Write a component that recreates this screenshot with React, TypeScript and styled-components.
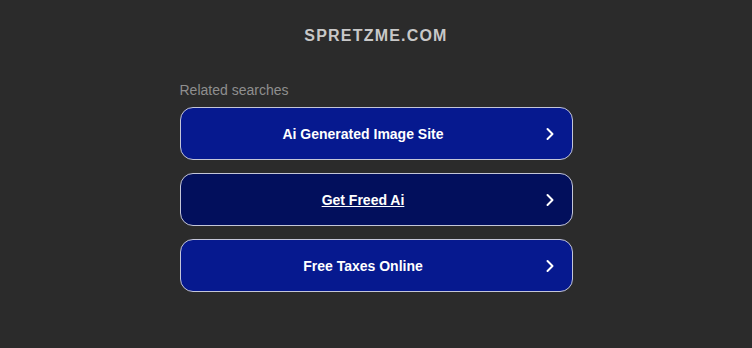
import React from "react";
import styled, { createGlobalStyle } from "styled-components";

const GlobalStyle = createGlobalStyle`
  html, body {
    margin: 0;
    padding: 0;
    background: #2b2b2b;
    font-family: "Liberation Sans", Arial, sans-serif;
  }
`;

const Page = styled.div`
  width: 752px;
  height: 348px;
  display: flex;
  flex-direction: column;
  align-items: center;
  padding-top: 27px;
  box-sizing: border-box;
`;

const Domain = styled.h1`
  margin: 0;
  font-size: 16px;
  font-weight: 700;
  letter-spacing: 1.2px;
  color: #c8c8c8;
  line-height: 18px;
`;

const Related = styled.section`
  width: 393px;
  margin-top: 37px;
  display: flex;
  flex-direction: column;
`;

const Caption = styled.div`
  font-size: 14px;
  color: #8f8f8f;
  line-height: 16px;
  margin-bottom: 9px;
`;

const LinkList = styled.div`
  display: flex;
  flex-direction: column;
  gap: 13px;
`;

const LinkButton = styled.a<{ $active?: boolean }>`
  height: 53px;
  box-sizing: border-box;
  display: flex;
  align-items: center;
  padding: 0 12px 0 6px;
  border: 1.5px solid #c4c6d8;
  border-radius: 13px;
  background: ${p => (p.$active ? "#020f5c" : "#06198f")};
  color: #ffffff;
  text-decoration: none;
  cursor: pointer;
`;

const Label = styled.span<{ $active?: boolean }>`
  flex: 1;
  text-align: center;
  font-size: 14px;
  font-weight: 700;
  text-decoration: ${p => (p.$active ? "underline" : "none")};
`;

const Arrow = styled.span`
  width: 20px;
  display: flex;
  justify-content: center;
`;

const Chevron = () => (
  <svg width="10" height="14" viewBox="0 0 10 14">
    <path
      d="M2.5 2 L7.5 7 L2.5 12"
      fill="none"
      stroke="#ffffff"
      strokeWidth="2"
      strokeLinecap="round"
      strokeLinejoin="round"
    />
  </svg>
);

const searches = [
  { title: "Ai Generated Image Site" },
  { title: "Get Freed Ai", active: true },
  { title: "Free Taxes Online" },
];

export default function App() {
  return (
    <Page>
      <GlobalStyle />
      <Domain>SPRETZME.COM</Domain>
      <Related>
        <Caption>Related searches</Caption>
        <LinkList>
          {searches.map(s => (
            <LinkButton key={s.title} $active={s.active}>
              <Label $active={s.active}>{s.title}</Label>
              <Arrow>
                <Chevron />
              </Arrow>
            </LinkButton>
          ))}
        </LinkList>
      </Related>
    </Page>
  );
}
